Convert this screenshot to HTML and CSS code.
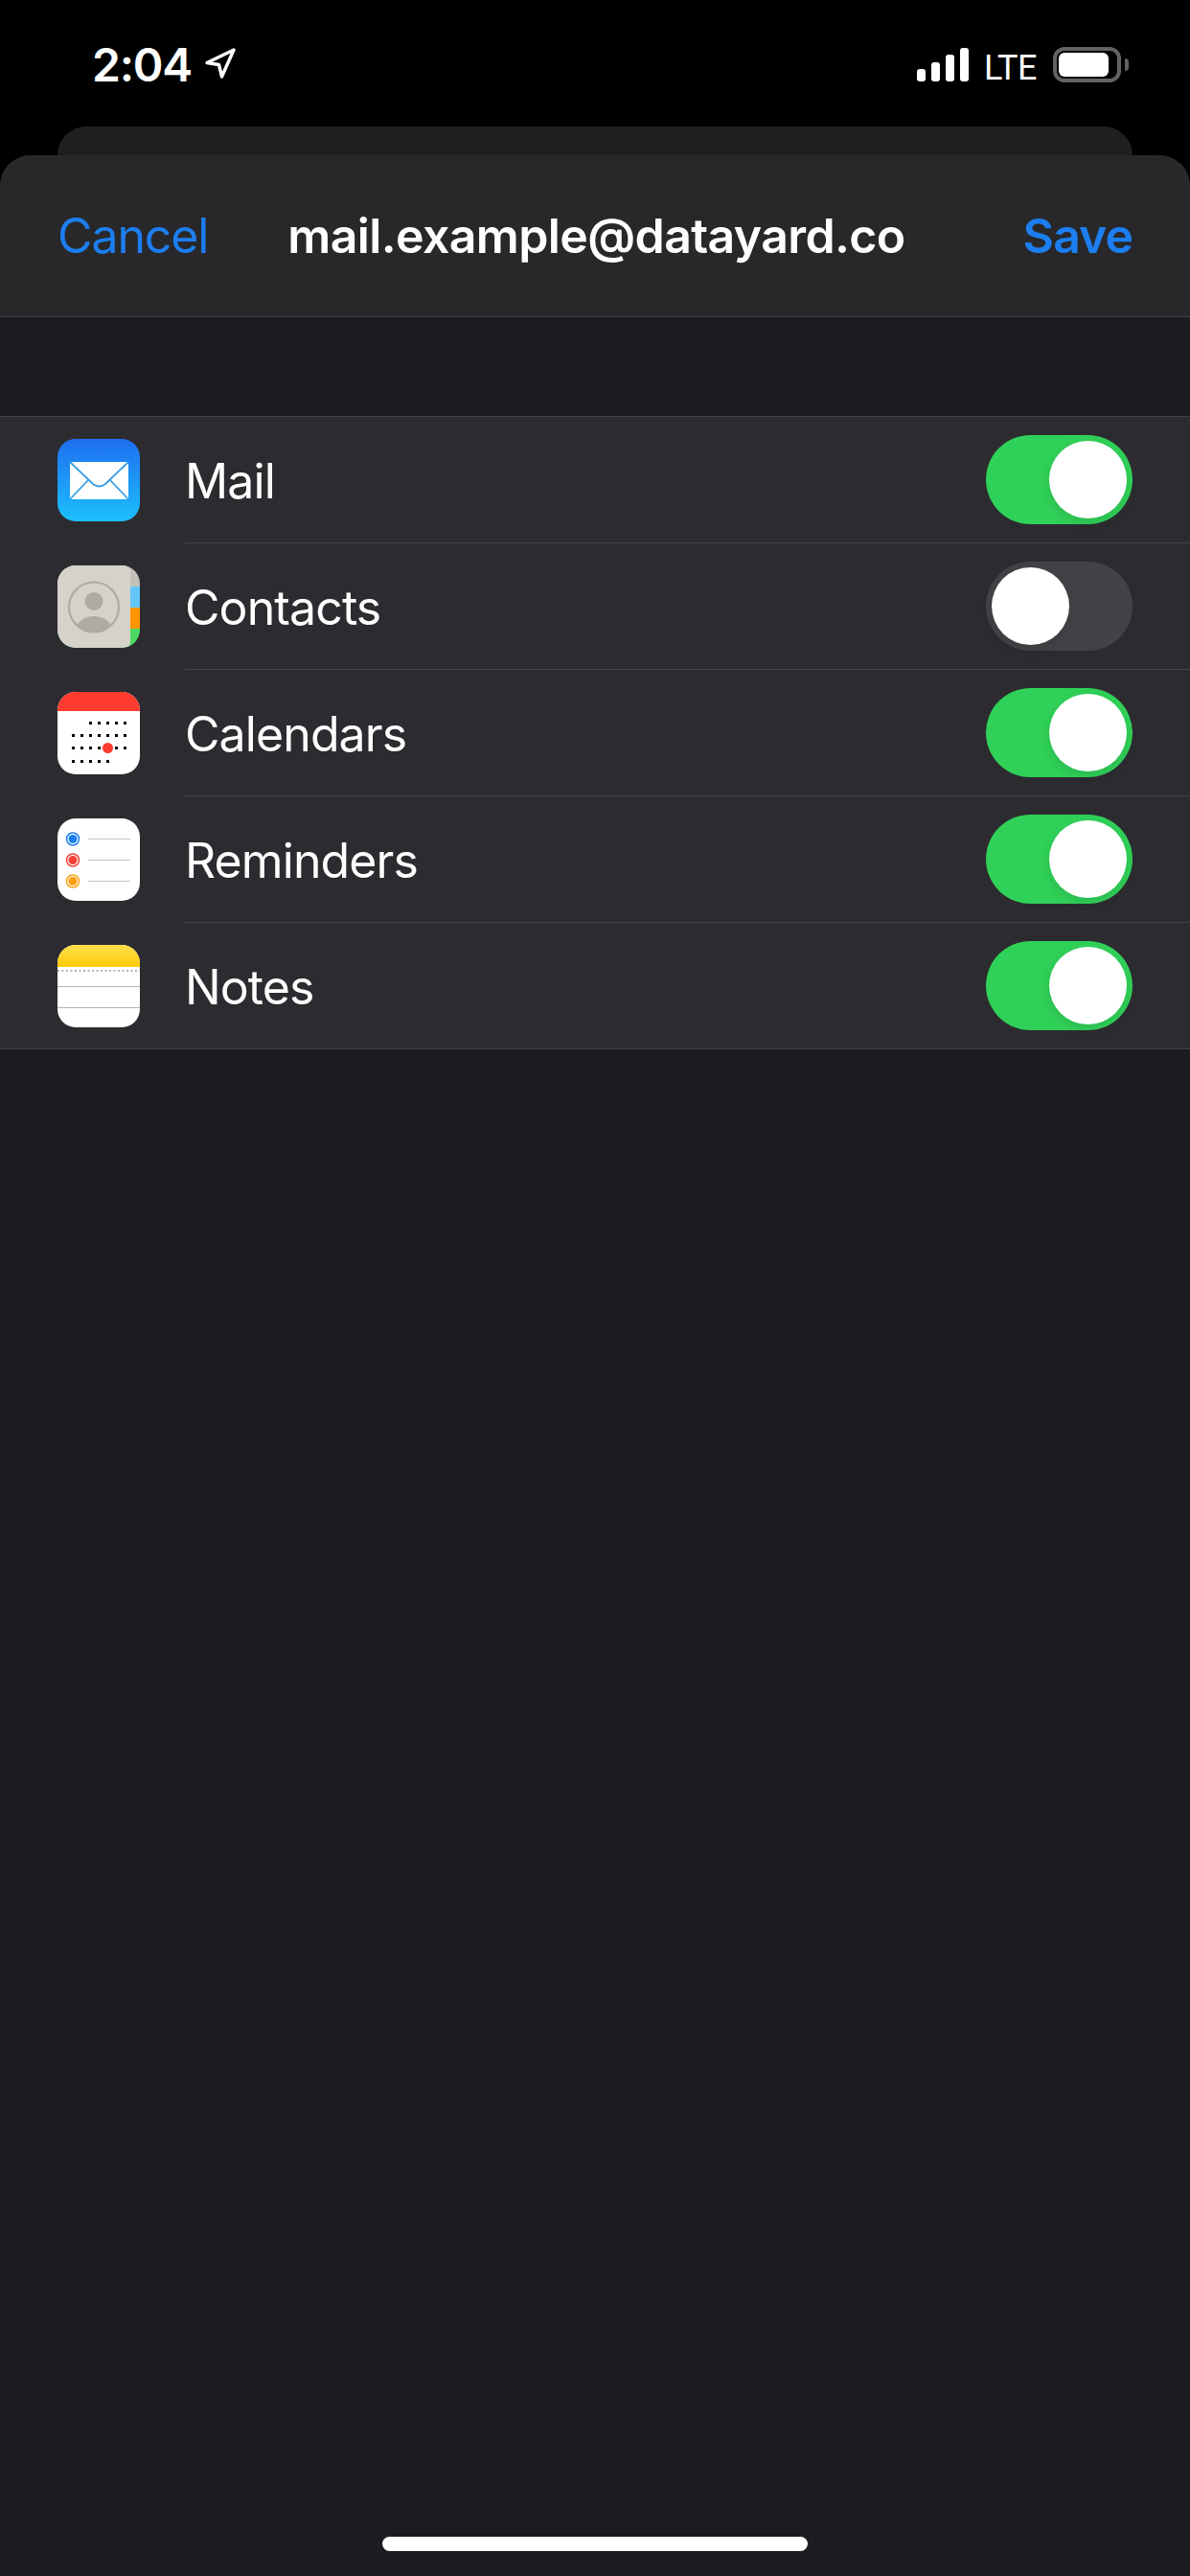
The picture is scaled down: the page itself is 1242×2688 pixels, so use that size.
FILE: index.html
```html
<!DOCTYPE html>
<html lang="en">
<head>
<meta charset="utf-8">
<title>mail.example@datayard.co</title>
<link rel="stylesheet" href="styles.css">
</head>
<body>
<div class="phone">
  <div class="status">
    <div class="status-left">
      <span class="time">2:04</span>
      <svg class="loc" width="34" height="34" viewBox="0 0 34 34"><path d="M3 16.5 L31 3 L18.5 31 L15.5 18.5 Z" fill="none" stroke="#fff" stroke-width="3.4" stroke-linejoin="round"/></svg>
    </div>
    <div class="status-right">
      <div class="signal"><i class="b1"></i><i class="b2"></i><i class="b3"></i><i class="b4"></i></div>
      <span class="lte">LTE</span>
      <div class="battery"><div class="battery-body"><div class="battery-fill"></div></div><div class="battery-nub"></div></div>
    </div>
  </div>
  <div class="back-card"></div>
  <div class="sheet">
    <header class="nav">
      <span class="nav-btn">Cancel</span>
      <span class="nav-title">mail.example@datayard.co</span>
      <span class="nav-btn nav-save">Save</span>
    </header>
    <ul class="list">
      <li class="row">
        <svg class="icon" viewBox="0 0 86 86">
          <defs><linearGradient id="mailg" x1="0" y1="0" x2="0" y2="1"><stop offset="0" stop-color="#1f6ff0"/><stop offset="1" stop-color="#1bc0fd"/></linearGradient></defs>
          <rect width="86" height="86" rx="19" fill="url(#mailg)"/>
          <rect x="13" y="24" width="61" height="39" fill="#fff"/>
          <path d="M13 24 L37 47 Q43.500 52 50 47 L74 24 M13 63 L32 43 M74 63 L55 43" fill="none" stroke="#3a9fe8" stroke-width="1.800"/>
        </svg>
        <div class="row-main"><span class="label">Mail</span><div class="toggle on"><span class="knob"></span></div></div>
      </li>
      <li class="row">
        <svg class="icon" viewBox="0 0 86 86">
          <defs>
            <clipPath id="cround"><rect width="86" height="86" rx="19"/></clipPath>
            <clipPath id="ccircle"><circle cx="38" cy="43.500" r="26"/></clipPath>
          </defs>
          <g clip-path="url(#cround)">
            <rect width="86" height="22" fill="#c4c1ba"/>
            <rect y="22" width="86" height="22" fill="#62c6f8"/>
            <rect y="44" width="86" height="22" fill="#ff9500"/>
            <rect y="66" width="86" height="20" fill="#4cd964"/>
            <path d="M0 0 H70 Q76 0 76 6 V80 Q76 86 70 86 H0 Z" fill="#d5d2ca"/>
          </g>
          <circle cx="38" cy="43.500" r="26" fill="none" stroke="#afaaa4" stroke-width="2.200"/>
          <circle cx="38" cy="37.500" r="9.500" fill="#afaaa4"/>
          <ellipse cx="38" cy="70" rx="20" ry="17" fill="#afaaa4" clip-path="url(#ccircle)"/>
        </svg>
        <div class="row-main"><span class="label">Contacts</span><div class="toggle"><span class="knob"></span></div></div>
      </li>
      <li class="row">
        <svg class="icon" viewBox="0 0 86 86">
          <defs><clipPath id="calr"><rect width="86" height="86" rx="19"/></clipPath></defs>
          <g clip-path="url(#calr)">
            <rect width="86" height="86" fill="#fff"/>
            <rect width="86" height="20" fill="#ff3b30"/>
          </g>
          <path d="M33 31h3v3h-3z M42 31h3v3h-3z M51 31h3v3h-3z M60 31h3v3h-3z M69 31h3v3h-3z M15 44h3v3h-3z M24 44h3v3h-3z M33 44h3v3h-3z M42 44h3v3h-3z M51 44h3v3h-3z M60 44h3v3h-3z M69 44h3v3h-3z M15 57h3v3h-3z M24 57h3v3h-3z M33 57h3v3h-3z M42 57h3v3h-3z M60 57h3v3h-3z M69 57h3v3h-3z M15 71h3v3h-3z M24 71h3v3h-3z M33 71h3v3h-3z M42 71h3v3h-3z M51 71h3v3h-3z" fill="#000"/>
          <circle cx="52.500" cy="58.500" r="5.500" fill="#ff3b30"/>
        </svg>
        <div class="row-main"><span class="label">Calendars</span><div class="toggle on"><span class="knob"></span></div></div>
      </li>
      <li class="row">
        <svg class="icon" viewBox="0 0 86 86">
          <rect width="86" height="86" rx="19" fill="#fff"/>
          <circle cx="16" cy="21.500" r="6.500" fill="none" stroke="#1a7ff0" stroke-width="1.500"/><circle cx="16" cy="21.500" r="4.500" fill="#1a7ff0"/>
          <circle cx="16" cy="43.500" r="6.500" fill="none" stroke="#f5413a" stroke-width="1.500"/><circle cx="16" cy="43.500" r="4.500" fill="#f5413a"/>
          <circle cx="16" cy="65.500" r="6.500" fill="none" stroke="#ff9f0a" stroke-width="1.500"/><circle cx="16" cy="65.500" r="4.500" fill="#ff9f0a"/>
          <path d="M32 21.500H76 M32 43.500H76 M32 65.500H76" stroke="#c6c6ca" stroke-width="1"/>
        </svg>
        <div class="row-main"><span class="label">Reminders</span><div class="toggle on"><span class="knob"></span></div></div>
      </li>
      <li class="row">
        <svg class="icon" viewBox="0 0 86 86">
          <defs>
            <clipPath id="nr"><rect width="86" height="86" rx="19"/></clipPath>
            <linearGradient id="ng" x1="0" y1="0" x2="0" y2="1"><stop offset="0" stop-color="#ffe04e"/><stop offset="1" stop-color="#ffca08"/></linearGradient>
          </defs>
          <g clip-path="url(#nr)">
            <rect width="86" height="86" fill="#fff"/>
            <rect width="86" height="23" fill="url(#ng)"/>
            <path d="M0 27H86" stroke="#b5b5b5" stroke-width="2" stroke-dasharray="2 2.500"/>
            <path d="M0 43.500H86 M0 65.500H86" stroke="#b4b4b4" stroke-width="1"/>
          </g>
        </svg>
        <div class="row-main last"><span class="label">Notes</span><div class="toggle on"><span class="knob"></span></div></div>
      </li>
    </ul>
    <div class="home-bar"></div>
  </div>
</div>
</body>
</html>
```
FILE: styles.css
```css
* { box-sizing: border-box; }
html, body { margin: 0; padding: 0; background: #000; }
.phone {
  width: 1242px;
  height: 2688px;
  display: flex;
  flex-direction: column;
  background: #000;
  color: #fff;
  font-family: Inter, "Liberation Sans", sans-serif;
  overflow: hidden;
}
.status {
  height: 132px;
  flex: none;
  display: flex;
  justify-content: space-between;
  padding: 48px 64px 0 96px;
}
.status-left { display: flex; align-items: flex-start; gap: 13px; }
.time { font-size: 48px; font-weight: 600; line-height: 40px; letter-spacing: -1.2px; }
.loc { margin-top: 1px; }
.status-right { display: flex; align-items: flex-start; }
.signal { display: flex; align-items: flex-end; gap: 6px; height: 35px; margin-top: 2px; }
.signal i { display: block; width: 9px; background: #fff; border-radius: 3px; }
.b1 { height: 13px; }
.b2 { height: 20px; }
.b3 { height: 28px; }
.b4 { height: 35px; }
.lte {
  font-family: Roboto, sans-serif;
  font-size: 36px;
  line-height: 30px;
  margin: 8px 0 0 16px;
  letter-spacing: -0.5px;
}
.battery { display: flex; align-items: center; margin: 1px 0 0 17px; }
.battery-body {
  width: 71px;
  height: 37px;
  border: 4px solid #626262;
  border-radius: 12px;
  padding: 2px;
}
.battery-fill { width: 52px; height: 100%; background: #fff; border-radius: 6px; }
.battery-nub { width: 4px; height: 13px; margin-left: 4px; background: #626262; border-radius: 0 4px 4px 0; }
.back-card {
  flex: none;
  height: 30px;
  margin: 0 60px;
  background: #1f1f21;
  border-radius: 30px 30px 0 0;
}
.sheet {
  flex: 1;
  display: flex;
  flex-direction: column;
  background: #1c1c20;
  border-radius: 32px 32px 0 0;
  overflow: hidden;
}
.nav {
  flex: none;
  height: 169px;
  display: flex;
  align-items: center;
  justify-content: space-between;
  padding: 0 60px;
  background: #28282b;
  border-bottom: 1px solid #414144;
}
.nav-btn { font-size: 50px; color: #1c7ef0; letter-spacing: -1.1px; }
.nav-save { font-weight: 600; letter-spacing: -1px; }
.nav-title { font-size: 50px; font-weight: 600; letter-spacing: -0.62px; margin: 0 32px 0 -8px; }
.list {
  list-style: none;
  margin: 103px 0 0;
  padding: 0;
  background: #2c2c30;
  border-top: 1px solid #414144;
  border-bottom: 1px solid #414144;
}
.row {
  height: 132px;
  display: flex;
  align-items: center;
  padding-left: 60px;
}
.row:last-child { height: 131px; }
.icon { width: 86px; height: 86px; flex: none; }
.row-main {
  flex: 1;
  height: 100%;
  margin-left: 47px;
  padding-right: 60px;
  display: flex;
  align-items: center;
  justify-content: space-between;
  border-bottom: 1px solid #46464a;
}
.row-main.last { border-bottom: 0; }
.label { font-size: 50px; letter-spacing: -0.9px; padding-top: 2px; }
.toggle {
  width: 153px;
  height: 93px;
  border-radius: 47px;
  background: #434347;
  padding: 6px;
  display: flex;
}
.toggle.on { background: #30d158; justify-content: flex-end; }
.knob {
  width: 81px;
  height: 81px;
  border-radius: 50%;
  background: #fff;
  display: block;
  box-shadow: 0 4px 12px rgba(0, 0, 0, 0.12);
}
.home-bar {
  margin: auto auto 26px;
  width: 444px;
  height: 15px;
  border-radius: 8px;
  background: #fff;
}
```
